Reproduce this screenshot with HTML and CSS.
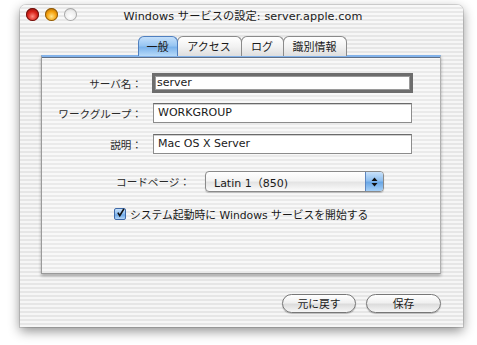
FILE: index.html
```html
<!DOCTYPE html>
<html lang="ja">
<head>
<meta charset="utf-8">
<title>Windows サービスの設定</title>
<link rel="stylesheet" href="styles.css">
</head>
<body>
<div class="window">
  <div class="titlebar">
    <div class="lights">
      <span class="light red"></span>
      <span class="light yellow"></span>
      <span class="light grey"></span>
    </div>
    <div class="title">Windows サービスの設定: server.apple.com</div>
  </div>
  <div class="content">
    <div class="tabs">
      <div class="tab active t1">一般</div>
      <div class="tab t2">アクセス</div>
      <div class="tab t3">ログ</div>
      <div class="tab t4">識別情報</div>
    </div>
    <div class="panel">
      <div class="row r1">
        <label class="lbl">サーバ名：</label>
        <div class="field focus">server</div>
      </div>
      <div class="row r2">
        <label class="lbl">ワークグループ：</label>
        <div class="field">WORKGROUP</div>
      </div>
      <div class="row r3">
        <label class="lbl">説明：</label>
        <div class="field">Mac OS X Server</div>
      </div>
      <div class="row r4">
        <label class="lbl wide">コードページ：</label>
        <div class="popup">
          <span class="popup-text">Latin 1（850)</span>
          <span class="popup-arrows">
            <svg width="7" height="10" viewBox="0 0 7 10"><path d="M3.5 0.5 L6.5 4 L0.5 4 Z M3.5 9.5 L6.5 6 L0.5 6 Z" fill="#111"/></svg>
          </span>
        </div>
      </div>
      <div class="row r5">
        <span class="check">
          <svg width="12" height="12" viewBox="0 0 12 12"><path d="M2.5 5.5 L5 9.5 L10.5 0.5" fill="none" stroke="#111" stroke-width="2.2"/></svg>
        </span>
        <span class="check-text">システム起動時に Windows サービスを開始する</span>
      </div>
    </div>
    <div class="buttons">
      <div class="btn b1">元に戻す</div>
      <div class="btn b2">保存</div>
    </div>
  </div>
</div>
</body>
</html>
```
FILE: styles.css
```css
* { box-sizing: border-box; }
html, body { margin: 0; padding: 0; background: #fff; }
body {
  width: 477px; height: 345px; overflow: hidden;
  font-family: "DejaVu Sans", "Noto Sans CJK JP", sans-serif;
  font-size: 11px; color: #1a1a1a;
}
.window {
  margin: 5px 0 0 20px;
  width: 443px; height: 322px;
  border-radius: 6px 6px 0 0;
  background: repeating-linear-gradient(to bottom, #f6f6f6 0 2px, #e6e6e6 2px 4px);
  box-shadow: 0 4px 12px rgba(0,0,0,0.45), 0 0 0 1px rgba(0,0,0,0.12);
  display: flex; flex-direction: column;
}
.titlebar {
  height: 19px; position: relative;
  display: flex; align-items: center;
  border-radius: 6px 6px 0 0;
  background: repeating-linear-gradient(to bottom, #f8f8f8 0 2px, #e8e8e8 2px 4px);
}
.lights { display: flex; gap: 6px; padding-left: 6px; }
.light {
  width: 13px; height: 13px; border-radius: 50%;
  display: inline-block;
}
.light.red { background: radial-gradient(circle at 50% 65%, #ff8c80 0, #d8221a 45%, #7a0a06 100%); box-shadow: inset 0 0 0 1px #6b1410; }
.light.yellow { background: radial-gradient(circle at 50% 65%, #ffe48a 0, #f6a10c 45%, #9a5600 100%); box-shadow: inset 0 0 0 1px #8a5a10; }
.light.grey { background: radial-gradient(circle at 50% 65%, #ffffff 0, #eeeeee 50%, #c4c4c4 100%); box-shadow: inset 0 0 0 1px #a8a8a8; }
.title {
  position: absolute; left: 0; right: 0; top: 2px;
  text-align: center; font-size: 11.2px; color: #1a1a1a;
  padding-left: 3px; letter-spacing: 0.1px;
}
.content { flex: 1; display: flex; flex-direction: column; padding: 12px 22px 0 21px; }
.tabs { display: flex; justify-content: center; height: 19px; position: relative; z-index: 1; margin-left: 1px; }
.tab {
  height: 20px; padding: 0;
  border: 1px solid #8a8a8a; border-bottom: none;
  border-radius: 6px 6px 0 0;
  background: linear-gradient(to bottom, #ffffff 0, #f2f2f2 50%, #dedede 100%);
  font-family: "Noto Sans CJK JP", sans-serif; font-size: 11px;
  line-height: 19px; margin-right: -1px; text-align: center;
  color: #1a1a1a;
}
.t1 { width: 40px; }
.t2 { width: 65px; }
.t3 { width: 43px; }
.t4 { width: 64px; }
.tab.active {
  background: linear-gradient(to bottom, #c5e0fb 0, #98c6f2 45%, #7cb4ec 55%, #b8daf8 100%);
  border-color: #4f7fbf;
  position: relative; z-index: 2;
}
.panel {
  height: 219px;
  border-top: 2px solid #82b2ea;
  border-left: 1px solid #9a9a9a;
  border-right: 1px solid #b0b0b0;
  border-bottom: 1px solid #9a9a9a;
  box-shadow: inset 0 1px 0 #5f6f86, 0 2px 3px rgba(0,0,0,0.3);
  background: repeating-linear-gradient(to bottom, #f8f8f8 0 2px, #eaeaea 2px 4px);
  padding-top: 16px;
  display: flex; flex-direction: column;
}
.row { display: flex; align-items: center; }
.lbl {
  width: 104px; text-align: right; padding-right: 4px;
  font-family: "Noto Sans CJK JP", sans-serif; font-size: 10.6px; color: #2a2a2a;
}
.lbl.wide { width: 154px; padding-right: 6px; }
.field {
  width: 261px; height: 20px; margin-left: 6px;
  background: #fff;
  border: 1px solid #8c8c8c;
  border-top-color: #6a6a6a;
  box-shadow: inset 0 1px 0 #d0d0d0;
  padding: 0 4px; line-height: 18px;
  font-size: 11px;
}
.field.focus {
  border: 3px solid #6d6d6d;
  box-shadow: inset 0 0 0 1px #9a9a9a;
  padding: 0 2px; line-height: 14px;
}
.r2 { margin-top: 10px; }
.r2 .field, .r3 .field { width: 259px; margin-left: 7px; height: 20px; }
.r3 { margin-top: 11px; }
.r4 { margin-top: 17px; }
.popup {
  width: 179px; height: 21px; margin-left: 9px;
  border: 1px solid #8a8a8a; border-radius: 4px;
  background: linear-gradient(to bottom, #ffffff 0, #f4f4f4 45%, #e4e4e4 55%, #fbfbfb 100%);
  display: flex; align-items: center; justify-content: space-between;
  overflow: hidden; box-shadow: 0 1px 1px rgba(0,0,0,0.2);
}
.popup-text { padding-left: 8px; font-size: 11px; }
.popup-arrows {
  width: 18px; height: 100%;
  background: linear-gradient(to bottom, #c9e2fb 0, #8fbfef 45%, #6aa7e6 55%, #a6d0f7 100%);
  border-left: 1px solid #5d86c0;
  display: flex; align-items: center; justify-content: center;
}
.r5 { margin-top: 14px; padding-left: 72px; }
.check {
  width: 12px; height: 12px; border: 1px solid #3f6aa8; border-radius: 2px;
  background: linear-gradient(to bottom, #c8e2fb 0, #8cbcef 50%, #6ea9e8 60%, #b7d8f8 100%);
  display: inline-flex; align-items: center; justify-content: center; overflow: visible;
}
.check svg { margin-top: -2px; margin-left: 1px; }
.check-text { margin-left: 4px; font-size: 10.8px; color: #1a1a1a; }
.buttons { display: flex; justify-content: flex-end; gap: 10px; margin-top: 20px; padding-right: 0; }
.btn {
  height: 19px; border: 1px solid #777; border-radius: 10px;
  background: linear-gradient(to bottom, #ffffff 0, #f0f0f0 45%, #dcdcdc 55%, #f6f6f6 100%);
  box-shadow: 0 1px 1px rgba(0,0,0,0.25);
  font-family: "Noto Sans CJK JP", sans-serif; font-size: 10.8px; line-height: 17px;
  text-align: center;
}
.b1 { width: 74px; }
.b2 { width: 75px; }
```
